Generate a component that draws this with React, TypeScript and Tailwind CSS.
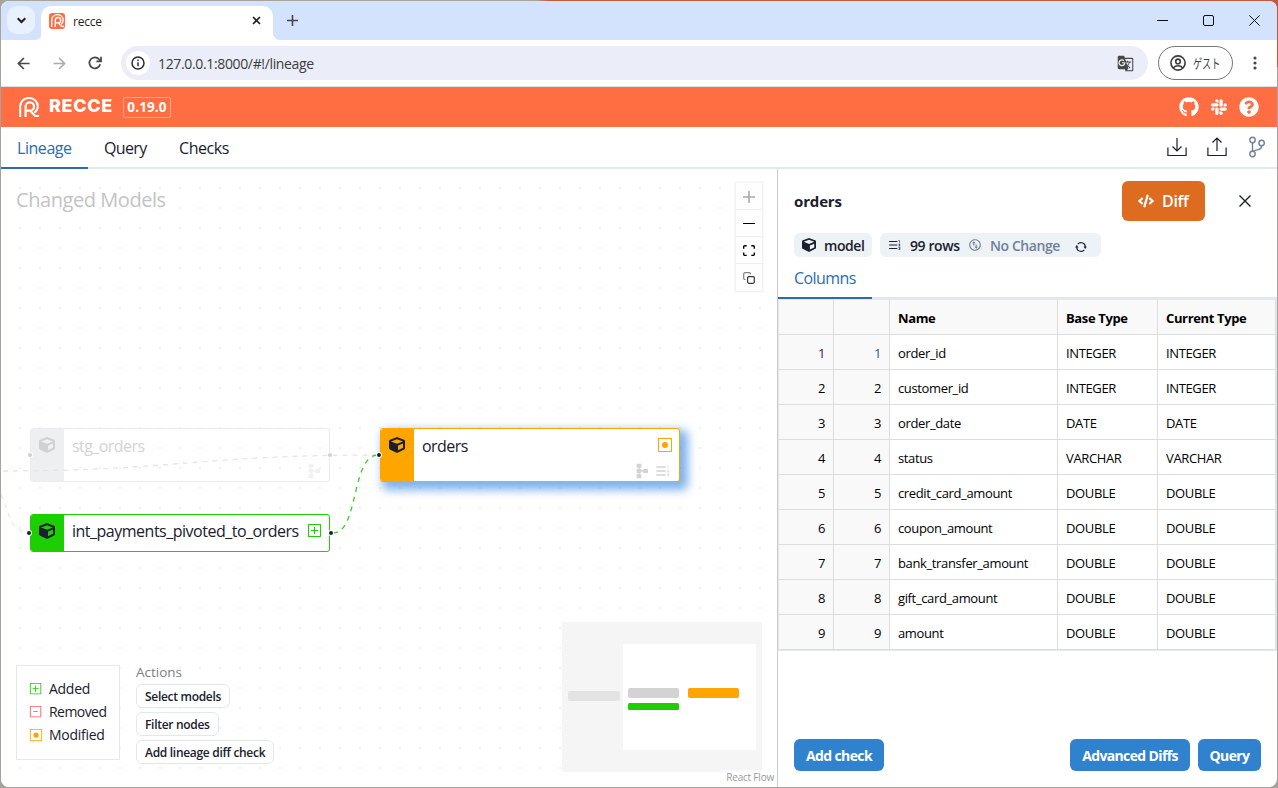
import type { ReactNode } from "react";
import clsx from "clsx";
import { FaCode, FaCube, FaGithub, FaQuestionCircle, FaSlack } from "react-icons/fa";
import { MdFormatListNumberedRtl, MdGTranslate, MdSchema } from "react-icons/md";
import { VscDiffAdded, VscDiffModified, VscDiffRemoved } from "react-icons/vsc";
import { RiSwapLine } from "react-icons/ri";

const COLUMNS = [
  ["order_id", "INTEGER"],
  ["customer_id", "INTEGER"],
  ["order_date", "DATE"],
  ["status", "VARCHAR"],
  ["credit_card_amount", "DOUBLE"],
  ["coupon_amount", "DOUBLE"],
  ["bank_transfer_amount", "DOUBLE"],
  ["gift_card_amount", "DOUBLE"],
  ["amount", "DOUBLE"],
];

export default function App() {
  return (
    <div className="h-[788px] w-[1278px] bg-[#a5a29c] bg-[linear-gradient(to_right,#a8a49a_42%,#c4593a_43%)] bg-[length:100%_67px] bg-no-repeat p-px font-['Open_Sans','Noto_Sans_CJK_JP',sans-serif] text-[#1a202c]">
      <div className="flex h-[786px] w-[1276px] flex-col overflow-hidden rounded-lg bg-white">
        <TabStrip />
        <Toolbar />
        <AppHeader />
        <NavBar />
        <main className="flex min-h-0 flex-1">
          <LineageCanvas />
          <NodePanel />
        </main>
      </div>
    </div>
  );
}

/* Browser chrome */

function TabStrip() {
  return (
    <div className="flex h-[39px] shrink-0 items-end bg-[#d3e3fd]">
      <div className="mb-[6px] ml-[6px] flex h-7 w-7 items-center justify-center rounded-[10px] bg-[#e9f0fe]">
        <svg className="h-[9px] w-[9px]" viewBox="0 0 8 8" fill="none" stroke="#1f1f1f" strokeWidth="1.8">
          <path d="M.6 2l3.4 3.4L7.4 2" />
        </svg>
      </div>
      <TabCorner />
      <div className="-ml-px flex h-[34px] w-[232px] items-center rounded-t-[10px] bg-white pr-[12px] pl-2">
        <div className="mb-[5px] flex h-4 w-4 items-center justify-center rounded-[3px] bg-[#ff6e42] text-white">
          <RecceMark className="h-[13px] w-[13px]" />
        </div>
        <span className="mb-[3px] ml-2 flex-1 text-[12px] tracking-[-0.02em] text-[#1f1f1f]">recce</span>
        <svg className="mb-[5px] h-[9px] w-[9px]" viewBox="0 0 9 9" stroke="#1f1f1f" strokeWidth="1.6">
          <path d="M1 1l7 7M8 1L1 8" />
        </svg>
      </div>
      <TabCorner right />
      <svg className="mb-[14px] ml-[7px] h-[11px] w-[11px]" viewBox="0 0 11 11" stroke="#474747" strokeWidth="1.6">
        <path d="M5.5 0v11M0 5.5h11" />
      </svg>
      <div className="mr-[17px] mb-[14px] ml-auto flex items-center gap-[35px]">
        <svg className="h-[11px] w-[11px]" viewBox="0 0 11 11" stroke="#111">
          <path d="M0 5.5h11" />
        </svg>
        <svg className="h-[11px] w-[11px]" viewBox="0 0 11 11" stroke="#111" fill="none">
          <rect x=".5" y=".5" width="10" height="10" rx="1.5" />
        </svg>
        <svg className="h-[11px] w-[11px]" viewBox="0 0 11 11" stroke="#111">
          <path d="M.4.4l10.2 10.2M10.6.4L.4 10.6" />
        </svg>
      </div>
    </div>
  );
}

function TabCorner({ right }: { right?: boolean }) {
  return (
    <svg className={clsx("h-[7px] w-[7px]", right && "-scale-x-100")} viewBox="0 0 7 7" fill="#fff">
      <path d="M7 0v7H0a7 7 0 0 0 7-7z" />
    </svg>
  );
}

function Toolbar() {
  return (
    <div className="flex h-[47px] shrink-0 items-center border-b border-[#dfe1e5] pl-4">
      <svg className="h-[13px] w-[13px]" viewBox="0 0 13 13" fill="none" stroke="#474747" strokeWidth="1.7">
        <path d="M12.5 6.5H1.4M6.9 1L1.4 6.5 6.9 12" />
      </svg>
      <svg className="ml-[23px] h-[13px] w-[13px]" viewBox="0 0 13 13" fill="none" stroke="#adadad" strokeWidth="1.7">
        <path d="M.5 6.5h11.1M6.1 1l5.500 5.500L6.100 12" />
      </svg>
      <svg className="ml-[22px] h-[14px] w-[14px]" viewBox="0 0 14 14" fill="none" stroke="#474747" strokeWidth="1.7">
        <path d="M12.2 8.3a5.5 5.5 0 1 1-1.1-5L13 5.2" />
        <path d="M13 .8v4.6H8.4" />
      </svg>
      <div className="ml-[19px] flex h-[34px] w-[1027px] items-center rounded-full bg-[#ebeef8] pr-[14px] pl-[5px]">
        <div className="flex h-6 w-6 items-center justify-center rounded-full bg-white">
          <svg className="h-[14px] w-[14px]" viewBox="0 0 14 14" fill="none" stroke="#2b2b2b" strokeWidth="1.5">
            <circle cx="7" cy="7" r="6" />
            <path d="M7 6.3v4M7 3.6v1.4" />
          </svg>
        </div>
        <span className="ml-[8px] flex-1 text-[14px] tracking-[-0.025em] text-[#3c3c3c]">127.0.0.1:8000/#!/lineage</span>
        <MdGTranslate className="h-[17px] w-[17px] text-[#474747]" />
      </div>
      <div className="ml-[10px] flex h-[34px] w-[75px] items-center rounded-full border border-[#747775] pl-[11px]">
        <svg className="h-4 w-4 shrink-0" viewBox="0 0 16 16" fill="none" stroke="#3c3c3c" strokeWidth="1.6">
          <circle cx="8" cy="8" r="7.1" />
          <circle cx="8" cy="6.4" r="2.3" />
          <path d="M3.2 13c1.3-1.5 3-2.2 4.8-2.2s3.5.7 4.8 2.2" />
        </svg>
        <span className="mt-px ml-[7px] w-9 origin-left scale-x-[0.7] text-[13px] whitespace-nowrap text-[#3c3c3c]">ゲスト</span>
      </div>
      <svg className="ml-5 h-[14px] w-1" viewBox="0 0 4 14" fill="#474747">
        <circle cx="2" cy="2" r="1.6" />
        <circle cx="2" cy="7" r="1.6" />
        <circle cx="2" cy="12" r="1.6" />
      </svg>
    </div>
  );
}

/* Recce header */

function RecceMark({ className }: { className?: string }) {
  return (
    <svg className={className} viewBox="0 0 20 20" fill="none" stroke="currentColor">
      <path d="M1.200 20V9.200A8.400 8.400 0 0 1 10 1a8.400 8.400 0 0 1 8.800 8.300c0 2.800-1.200 4.900-3.400 6.500" strokeWidth="2" />
      <path d="M6.600 20V9.400a4.200 4.200 0 1 1 4.200 4.300H6.600" strokeWidth="2.200" />
      <path d="M11.500 14l4.700 5h3.800" strokeWidth="2" />
    </svg>
  );
}

function AppHeader() {
  return (
    <header className="flex h-10 shrink-0 items-center bg-[#ff6e42] pr-[18px] pl-[18px] text-white">
      <RecceMark className="h-5 w-5" />
      <h1 className="mb-[2px] ml-[10px] w-[64px] font-['Inter'] text-[18px] leading-none font-extrabold tracking-[0.035em]">RECCE</h1>
      <span className="ml-[10px] flex h-[21px] w-12 items-center justify-center rounded-[2px] border border-white/40 pt-px text-[13.5px] font-bold tracking-[0.01em]">
        0.19.0
      </span>
      <div className="ml-auto flex items-center gap-[10px]">
        <FaGithub className="h-5 w-5" />
        <FaSlack className="h-[18px] w-5" />
        <FaQuestionCircle className="h-5 w-5" />
      </div>
    </header>
  );
}

function NavBar() {
  return (
    <nav className="flex h-[42px] shrink-0 items-stretch text-[16px] tracking-[-0.028em] shadow-[inset_0_-2px_0_#e2e8f0]">
      <a className="flex w-[87px] items-center border-b-2 border-[#2b6cb0] pt-px pl-4 text-[#2b6cb0]">Lineage</a>
      <a className="flex w-[75px] items-center border-b-2 border-transparent pt-px pl-4 tracking-[-0.04em]">Query</a>
      <a className="flex items-center border-b-2 border-transparent pt-px pl-4">Checks</a>
      <div className="mr-[11px] mb-[2px] ml-auto flex items-center gap-5">
        <svg className="h-5 w-5" viewBox="0 0 20 20" fill="none" stroke="#1a202c" strokeWidth="1.2">
          <path d="M.9 10.5v8h18.2v-8M10 1v13M5.5 9.5L10 14l4.5-4.5" />
        </svg>
        <svg className="h-5 w-5" viewBox="0 0 20 20" fill="none" stroke="#1a202c" strokeWidth="1.2">
          <path d="M.9 10.5v8h18.2v-8M10 14V1M5.5 5.5L10 1l4.5 4.5" />
        </svg>
        <svg className="ml-px h-[22px] w-[18px]" viewBox="0 0 18 22" fill="none" stroke="#718096" strokeWidth="1.4">
          <circle cx="4.5" cy="4" r="2.7" />
          <circle cx="4.5" cy="18" r="2.7" />
          <circle cx="13.6" cy="7" r="2.7" />
          <path d="M4.5 6.7v8.6M13.6 9.7c0 5.5-5.5 3-8.4 5.8" />
        </svg>
      </div>
    </nav>
  );
}

/* Lineage graph */

function LineageCanvas() {
  return (
    <section className="relative w-[776px] shrink-0 overflow-hidden bg-white">
      <svg className="absolute inset-0 h-full w-full">
        <defs>
          <pattern id="dots" x="8" y="8" width="20" height="20" patternUnits="userSpaceOnUse">
            <circle cx="11" cy="11" r="1" fill="#ebebeb" />
          </pattern>
        </defs>
        <rect width="100%" height="100%" fill="url(#dots)" />
      </svg>

      <div className="absolute top-[18px] left-[15px] text-[20px] leading-[26px] tracking-[-0.022em] text-[#c3c3c3]">Changed Models</div>

      <GraphNode className="top-[259px] left-[29px] h-[54px]" faded label="stg_orders" />
      <svg className="absolute inset-0 h-full w-full" fill="none" strokeDasharray="5 5">
        <path d="M2 302C170 302 200 286 376 286" stroke="#f0e0e1" strokeWidth="1.3" />
        <path d="M0 325C8 345 10 361 24 363" stroke="#dcf2d9" strokeWidth="1.3" />
        <path d="M332 364C358 364 350 286 377 286" stroke="#3bcf2a" strokeWidth="1.3" />
      </svg>
      <GraphNode className="top-[345px] left-[29px] h-[38px]" status="added" label="int_payments_pivoted_to_orders" />
      <GraphNode className="top-[259px] left-[379px] h-[54px]" status="modified" label="orders" />
      <Handle className="top-[284px] left-[27px] bg-[#cfcfcf]" />
      <Handle className="top-[284px] left-[327px] bg-[#cfcfcf]" />
      <Handle className="top-[362px] left-[26px] bg-[#1a202c]" />
      <Handle className="top-[362px] left-[328px] bg-[#1a202c]" />
      <Handle className="top-[284px] left-[376px] bg-[#1a202c]" />

      <Controls />
      <Legend />
      <Actions />
      <MiniMap />
      <div className="absolute right-0 bottom-0 bg-white/50 px-[3px] pb-[2px] text-[10px] leading-[15px] tracking-[-0.02em] text-[#999]">
        React Flow
      </div>
    </section>
  );
}

function Handle({ className }: { className: string }) {
  return <span className={clsx("absolute h-1 w-1 rounded-full ring-1 ring-white", className)} />;
}

type GraphNodeProps = {
  className: string;
  label: string;
  faded?: boolean;
  status?: "added" | "modified";
};

function GraphNode({ className, label, faded, status }: GraphNodeProps) {
  return (
    <div
      className={clsx(
        "absolute flex w-[300px] overflow-hidden rounded-[3px] border",
        faded && "border-[#ececec]",
        status === "added" && "border-[#1dce00] bg-white",
        status === "modified" && "border-[#ffa500] bg-white shadow-[5px_5px_10px_3px_rgba(0,102,218,0.5)]",
        className,
      )}
    >
      <div
        className={clsx(
          "flex w-[33px] shrink-0 justify-center pt-2 pr-px",
          faded && "bg-[#edeff1] text-[#d0d1d3]",
          status === "added" && "bg-[#1dce00]",
          status === "modified" && "bg-[#ffa500]",
        )}
      >
        <FaCube className="h-4 w-4" />
      </div>
      <div className="flex min-w-0 flex-1 flex-col pl-2">
        <div className="flex h-8 items-center justify-between pr-[6px]">
          <span
            className={clsx(
              "text-[16px] whitespace-nowrap",
              status === "added" ? "tracking-[-0.031em]" : "mt-px tracking-[-0.035em]",
              faded && "text-[#d2d3d5]",
            )}
          >
            {label}
          </span>
          {status === "added" && <VscDiffAdded className="h-4 w-4 shrink-0 text-[#1dce00]" />}
          {status === "modified" && <VscDiffModified className="h-4 w-4 shrink-0 text-[#ffa500]" />}
        </div>
        {status !== "added" && (
          <div className={clsx("mt-[2px] flex gap-[5px]", faded ? "ml-[234px] text-[#f1f1f1]" : "ml-[212px] text-[#d3d3d3]")}>
            <MdSchema className="h-4 w-4" />
            {!faded && <MdFormatListNumberedRtl className="h-4 w-4" />}
          </div>
        )}
      </div>
    </div>
  );
}

function Controls() {
  return (
    <div className="absolute top-[14px] left-[735px] w-[26px] divide-y divide-[#eee] bg-[#fefefe] shadow-[0_0_2px_1px_rgba(0,0,0,0.08)]">
      <ControlButton>
        <svg className="w-3" viewBox="0 0 32 32" fill="#a8a8a8">
          <path d="M32 18.133H18.133V32h-4.266V18.133H0v-4.266h13.867V0h4.266v13.867H32z" />
        </svg>
      </ControlButton>
      <ControlButton>
        <svg className="w-3" viewBox="0 0 32 5">
          <path d="M0 0h32v4.200H0z" />
        </svg>
      </ControlButton>
      <ControlButton>
        <svg className="w-3" viewBox="0 0 32 30">
          <path d="M3.692 4.630c0-.53.4-.938.939-.938h5.215V0H4.708C2.130 0 0 2.054 0 4.630v5.216h3.692V4.631zM27.354 0h-5.200v3.692h5.170c.53 0 .984.4.984.939v5.215H32V4.631A4.624 4.624 0 0 0 27.354 0zm.954 24.830c0 .532-.4.94-.939.94h-5.215v3.768h5.215c2.577 0 4.631-2.130 4.631-4.707v-5.139h-3.692v5.139zm-23.677.94c-.531 0-.939-.4-.939-.94v-5.138H0v5.139c0 2.577 2.130 4.707 4.708 4.707h5.138V25.770H4.631z" />
        </svg>
      </ControlButton>
      <ControlButton>
        <svg className="h-3 w-3" viewBox="0 0 12 12" fill="none" strokeWidth="1.2">
          <path d="M2.6 7.5H2A1.3 1.3 0 0 1 .7 6.2V2A1.3 1.3 0 0 1 2 .7h4.2A1.3 1.3 0 0 1 7.5 2v.6" stroke="#7d8087" />
          <rect x="4.6" y="4.6" width="6.7" height="6.7" rx="1.2" stroke="#30343d" />
        </svg>
      </ControlButton>
    </div>
  );
}

function ControlButton({ children }: { children: ReactNode }) {
  return <div className="flex h-[27px] items-center justify-center pt-px">{children}</div>;
}

function Legend() {
  return (
    <div className="absolute top-[496px] left-[15px] h-[95px] w-[104px] border border-[#e2e8f0] bg-white pt-[11px] pl-3 text-[14px] tracking-[-0.02em]">
      <LegendItem icon={<VscDiffAdded className="h-[14px] w-[14px] text-[#1dce00]" />}>Added</LegendItem>
      <LegendItem icon={<VscDiffRemoved className="h-[14px] w-[14px] text-[#ff5a5a]" />}>
        <span className="tracking-[-0.04em]">Removed</span>
      </LegendItem>
      <LegendItem icon={<VscDiffModified className="h-[14px] w-[14px] text-[#ffa500]" />}>Modified</LegendItem>
    </div>
  );
}

function LegendItem({ icon, children }: { icon: ReactNode; children: ReactNode }) {
  return (
    <div className="flex h-[23px] items-center gap-[6px]">
      {icon}
      <span>{children}</span>
    </div>
  );
}

function Actions() {
  const actions = ["Select models", "Filter nodes", "Add lineage diff check"];
  return (
    <div className="absolute top-[493px] left-[135px] flex flex-col items-start gap-1">
      <div className="h-[18px] text-[13.5px] leading-[20px] text-[#808080]">Actions</div>
      {actions.map((a) => (
        <button
          key={a}
          className="h-6 rounded-md border border-[#e2e8f0] bg-white px-2 pt-px text-[12px] leading-none font-semibold tracking-[-0.025em] whitespace-nowrap"
        >
          {a}
        </button>
      ))}
    </div>
  );
}

function MiniMap() {
  return (
    <svg className="absolute top-[453px] left-[561px] h-[150px] w-[200px]" viewBox="0 0 200 150">
      <rect width="200" height="150" fill="#f5f5f5" />
      <rect x="61" y="22" width="133" height="106" fill="#fff" />
      <rect x="6" y="69" width="52" height="10" rx="2" fill="#e3e3e3" />
      <rect x="66" y="66" width="51" height="10" rx="2" fill="#d3d3d3" />
      <rect x="66" y="81" width="51" height="7" rx="1.5" fill="#1dce00" />
      <rect x="126" y="66" width="51" height="10" rx="2" fill="#ffa500" />
    </svg>
  );
}

/* Node detail */

function NodePanel() {
  return (
    <aside className="flex min-w-0 flex-1 flex-col border-l border-[#ccc]">
      <div className="flex h-16 shrink-0 items-center pl-4">
        <h2 className="mt-px text-[15px] font-bold tracking-[-0.01em]">orders</h2>
        <button className="ml-auto flex h-10 w-[83px] items-center gap-2 rounded-md bg-[#dd6b20] pl-4 text-[16px] font-semibold tracking-[-0.02em] text-white">
          <FaCode className="h-4 w-4" />
          Diff
        </button>
        <svg className="mr-[26px] ml-[34px] h-3 w-3" viewBox="0 0 12 12" stroke="#1a202c" strokeWidth="1.4">
          <path d="M.5.5l11 11M11.5.5l-11 11" />
        </svg>
      </div>
      <div className="flex h-6 shrink-0 gap-2 pl-4 text-[14px] font-semibold tracking-[-0.03em]">
        <span className="flex w-[78px] items-center gap-2 rounded-md bg-[#edf2f7] pl-2">
          <FaCube className="h-[14px] w-[14px]" />
          model
        </span>
        <span className="flex w-[221px] items-center rounded-md bg-[#edf2f7] pl-2 whitespace-nowrap">
          <MdFormatListNumberedRtl className="h-[14px] w-[14px]" />
          <span className="ml-2 w-[50px]">99 rows</span>
          <RiSwapLine className="ml-2 h-[14px] w-[14px] text-[#718096]" />
          <span className="ml-2 w-[71px] text-[#718096]">No Change</span>
          <svg className="mt-[3px] ml-[14px] h-3 w-3" viewBox="0 0 24 24" fill="#1a202c">
            <path d="M10.2 21.5a9.7 9.7 0 0 1-8-8.5H.3l3.3-5L7 13H4.5a7.6 7.6 0 0 0 13.3 4l1.7 1.5a9.8 9.8 0 0 1-9.3 3zM13.8 2.500a9.700 9.700 0 0 1 8 8.500h1.900l-3.300 5-3.400-5h2.500A7.600 7.600 0 0 0 6.200 7L4.500 5.500a9.800 9.800 0 0 1 9.300-3z" />
          </svg>
        </span>
      </div>
      <div className="flex h-[42px] shrink-0 text-[16px] shadow-[inset_0_-2px_0_#e2e8f0]">
        <span className="flex w-[94px] items-center border-b-2 border-[#2b6cb0] pt-px pl-4 tracking-[-0.035em] text-[#2b6cb0]">Columns</span>
      </div>
      <ColumnTable />
      <div className="mt-auto mb-4 flex h-8 gap-2 pr-4 pl-4 text-[14px] font-bold tracking-[-0.045em] text-white">
        <button className="w-[90px] rounded-md bg-[#3182ce]">Add check</button>
        <button className="ml-auto w-[120px] rounded-md bg-[#3182ce]">Advanced Diffs</button>
        <button className="w-[63px] rounded-md bg-[#3182ce]">Query</button>
      </div>
    </aside>
  );
}

const GRID = "grid h-[35px] grid-cols-[55px_56px_168px_100px_118px] items-stretch";

function ColumnTable() {
  return (
    <div className="w-[499px] border border-[#e2e8f0] text-[13px] tracking-[-0.028em] text-black">
      <div className={clsx(GRID, "font-bold")}>
        <Cell shaded />
        <Cell shaded />
        <Cell shaded>Name</Cell>
        <Cell shaded>Base Type</Cell>
        <Cell shaded>Current Type</Cell>
      </div>
      {COLUMNS.map(([name, type], i) => (
        <div key={name} className={GRID}>
          <Cell shaded right className={i === 0 ? "text-[#3c0c64]" : undefined}>{i + 1}</Cell>
          <Cell shaded right className={i === 0 ? "text-[#1662a8]" : undefined}>{i + 1}</Cell>
          <Cell>{name}</Cell>
          <Cell>{type}</Cell>
          <Cell>{type}</Cell>
        </div>
      ))}
    </div>
  );
}

function Cell({
  children,
  shaded,
  right,
  className,
}: {
  children?: ReactNode;
  shaded?: boolean;
  right?: boolean;
  className?: string;
}) {
  return (
    <div
      className={clsx(
        "flex items-center border-r border-b border-[#ddd] px-2 pt-1 whitespace-nowrap",
        shaded && "bg-[#f9f9f9]",
        right && "justify-end",
        className,
      )}
    >
      {children}
    </div>
  );
}
